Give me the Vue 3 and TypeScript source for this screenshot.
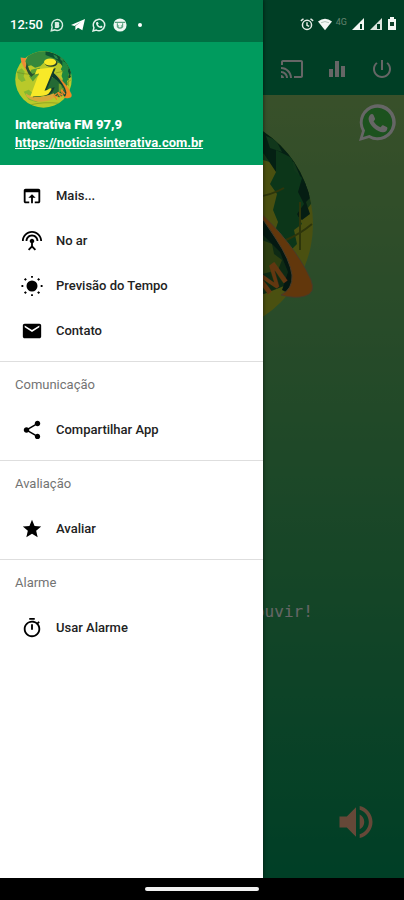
<script setup lang="ts">
interface MenuItem {
  label: string
  icon: string
}
interface MenuSection {
  title: string
  items: MenuItem[]
}

const icons: Record<string, string> = {
  browser:
    'M19 4H5c-1.110 0-2 .9-2 2v12c0 1.100.89 2 2 2h4v-2H5V8h14v10h-4v2h4c1.100 0 2-.9 2-2V6c0-1.100-.89-2-2-2zm-7 6l-4 4h3v6h2v-6h3l-4-4z',
  antenna:
    'M12 5c-3.870 0-7 3.130-7 7h2c0-2.760 2.240-5 5-5s5 2.240 5 5h2c0-3.870-3.130-7-7-7zm1 9.290c.88-.39 1.500-1.260 1.500-2.290 0-1.380-1.120-2.500-2.500-2.500S9.500 10.620 9.500 12c0 1.020.62 1.900 1.500 2.290v3.300L7.590 21 9 22.410l3-3 3 3L16.410 21 13 17.590v-3.300zM12 1C5.930 1 1 5.930 1 12h2c0-4.970 4.030-9 9-9s9 4.030 9 9h2c0-6.070-4.930-11-11-11z',
  sun:
    'M12 6a6 6 0 1 0 0 12 6 6 0 0 0 0-12zM11 1h2v2h-2zM11 21h2v2h-2zM.5 11h2v2h-2zM21.500 11h2v2h-2zM4.800 3.200l1.600 1.600-1.600 1.600-1.600-1.600zM19.200 3.200l1.600 1.600-1.600 1.600-1.600-1.600zM4.800 17.600l1.600 1.600-1.600 1.600-1.600-1.600zM19.200 17.600l1.600 1.600-1.600 1.600-1.600-1.600z',
  mail:
    'M20 4H4c-1.100 0-1.990.9-1.990 2L2 18c0 1.100.9 2 2 2h16c1.100 0 2-.9 2-2V6c0-1.100-.9-2-2-2zm0 4l-8 5-8-5V6l8 5 8-5v2z',
  share:
    'M18 16.080c-.76 0-1.440.3-1.960.77L8.910 12.700c.05-.23.09-.46.09-.7s-.04-.47-.09-.7l7.050-4.110c.54.5 1.250.81 2.040.81 1.660 0 3-1.340 3-3s-1.340-3-3-3-3 1.340-3 3c0 .24.04.47.09.7L8.040 9.810C7.500 9.310 6.790 9 6 9c-1.660 0-3 1.340-3 3s1.340 3 3 3c.79 0 1.500-.31 2.040-.81l7.120 4.160c-.05.21-.08.43-.08.65 0 1.610 1.310 2.920 2.920 2.920s2.920-1.310 2.920-2.920-1.310-2.920-2.920-2.920z',
  star:
    'M12 17.270L18.180 21l-1.640-7.030L22 9.240l-7.190-.61L12 2 9.190 8.630 2 9.240l5.460 4.730L5.820 21z',
  timer:
    'M15 1H9v2h6V1zm-4 13h2V8h-2v6zm8.030-6.610l1.420-1.420c-.43-.51-.9-.99-1.410-1.410l-1.420 1.420C16.070 4.740 14.120 4 12 4c-4.970 0-9 4.030-9 9s4.020 9 9 9 9-4.030 9-9c0-2.120-.74-4.070-1.970-5.610zM12 20c-3.870 0-7-3.130-7-7s3.130-7 7-7 7 3.130 7 7-3.130 7-7 7z',
  cast:
    'M21 3H3c-1.100 0-2 .9-2 2v3h2V5h18v14h-7v2h7c1.100 0 2-.9 2-2V5c0-1.100-.9-2-2-2zM1 18v3h3c0-1.660-1.340-3-3-3zm0-4v2c2.760 0 5 2.240 5 5h2c0-3.870-3.130-7-7-7zm0-4v2c4.970 0 9 4.030 9 9h2c0-6.080-4.930-11-11-11z',
  bars: 'M10 20h4V4h-4v16zm-6 0h4v-8H4v8zM16 9v11h4V9h-4z',
  power:
    'M13 3h-2v10h2V3zm4.830 2.170l-1.420 1.420C17.990 7.860 19 9.810 19 12c0 3.870-3.130 7-7 7s-7-3.130-7-7c0-2.190 1.010-4.140 2.580-5.420L6.170 5.170C4.230 6.820 3 9.260 3 12c0 4.970 4.030 9 9 9s9-4.030 9-9c0-2.740-1.230-5.180-3.170-6.830z',
  volume:
    'M3 9v6h4l5 5V4L7 9H3zm13.500 3c0-1.770-1.020-3.290-2.500-4.030v8.050c1.480-.73 2.500-2.250 2.500-4.020zM14 3.230v2.060c2.890.86 5 3.540 5 6.710s-2.110 5.850-5 6.710v2.060c4.010-.91 7-4.490 7-8.770s-2.990-7.860-7-8.770z',
}

const mainItems: MenuItem[] = [
  { label: 'Mais...', icon: 'browser' },
  { label: 'No ar', icon: 'antenna' },
  { label: 'Previsão do Tempo', icon: 'sun' },
  { label: 'Contato', icon: 'mail' },
]

const sections: MenuSection[] = [
  { title: 'Comunicação', items: [{ label: 'Compartilhar App', icon: 'share' }] },
  { title: 'Avaliação', items: [{ label: 'Avaliar', icon: 'star' }] },
  { title: 'Alarme', items: [{ label: 'Usar Alarme', icon: 'timer' }] },
]

const actions: MenuItem[] = [
  { label: 'Transmitir', icon: 'cast' },
  { label: 'Equalizador', icon: 'bars' },
  { label: 'Desligar', icon: 'power' },
]
</script>

<template>
  <div class="phone">
    <svg class="defs" aria-hidden="true">
      <defs>
        <clipPath id="globe-clip"><circle cx="112" cy="112" r="111" /></clipPath>
        <symbol id="globe" viewBox="0 0 224 224">
          <circle cx="112" cy="112" r="111" fill="#b9c92a" />
          <g clip-path="url(#globe-clip)">
            <path d="M40 40L60 0h50l60 0 40 30 20 50-12 16-8-14-8-22-16-8-13-4-14-6-20 6-20-8-20 20-20 6-16-10-14 4z" fill="#35883c" />
            <path d="M120 0l52 14 26 24 18 30 4 16-12 2-8-16-14-10-12-18-20-14-34-12z" fill="#0c5030" />
            <path d="M150 14l14 6 6 12-12-4zM176 24l10 4 6 12-12-4zM196 48l8 2 6 14-10-4z" fill="#2b8a44" />
            <path d="M206 72l12-2 4 14-6 6 4 12-8 6-12-8 2-12z" fill="#0e4a30" />
            <path d="M186 38l16 8 2 12 8 8-4 14 6 12-7 10 5 10-8 6 3 14-10 10-5-12-8-8 4-12-5-12 4-16-7-10 6-12z" fill="#20883f" />
            <path d="M8 80l18-12 12 14-4 18 8 16-16 6-14-14zM34 160l20-8 16 14 30 8 4 16-20 10-30-8z" fill="#82b832" />
            <path d="M64 74l34-8-8 30-20 24-14-20z" fill="#58a035" />
            <path d="M130 100l34 10 34 26 6 34-30 12-44-8-16-20z" fill="#246a34" />
            <path d="M172 128l10 4 2 10 8 6-4 10-16 4z" fill="#6f9c2c" />
            <path d="M8 84Q60 96 100 90M160 86Q180 84 194 76M196 128Q210 122 222 112M210 90v48M60 212Q112 198 176 206" fill="none" stroke="#71851d" stroke-width="2" />
          </g>
          <path d="M22 26l24 2-6 10 4 22 14 28-12-8-14-22-8-18z" fill="#ee8a38" />
          <path d="M46 44l10 30 12 16 12-4-16 16-12-14-10-22z" fill="#28502f" />
          <path d="M150 84l28 26 22 24 8 30-8 18-8-4 6-18-8-20-26-26-20-12z" fill="#0a3c2c" />
          <path d="M160 92Q182 110 198 131 212 148 221 168 226 181 215 184 205 187 191 183 203 177 202 163 200 148 186 127 176 110 160 92z" fill="#f58a20" stroke="#b09468" stroke-width="1" />
          <path d="M42 166q24 18 66 14 24-4 44-14l6 14-20 14q-54 16-92-14z" fill="#d9a83a" />
          <text class="fm" transform="translate(162 194) rotate(-36)">FM</text>
          <path d="M96 76l64-8-36 86q14-2 24-10l8-2q-10 30-36 34l-50 6 34-86-14 2z" fill="#153c2c" />
          <path d="M86 72l68-8-38 92q10-2 22-10l6 2q-8 24-32 28l-52 4 34-92-16 4z" fill="#f8e928" />
          <ellipse cx="142" cy="47" rx="25" ry="15" fill="#23412b" />
          <ellipse cx="138" cy="43" rx="24" ry="14" fill="#f8e928" />
        </symbol>
      </defs>
    </svg>

    <div class="stage">
      <main class="screen">
        <div class="status-space"></div>
        <header class="appbar">
          <button v-for="a in actions" :key="a.icon" class="icon-btn" type="button" :aria-label="a.label">
            <svg viewBox="0 0 24 24"><path :d="icons[a.icon]" /></svg>
          </button>
        </header>
        <section class="player">
          <div class="hero">
            <svg class="cover"><use href="#globe" /></svg>
            <button class="whatsapp" type="button" aria-label="WhatsApp">
              <svg viewBox="0 0 38 38">
                <path d="M1 37l3-10A18 18 0 1 1 11 34z" fill="#fff" />
                <path d="M5 33l2-6.500A14.800 14.800 0 1 1 11.500 31z" fill="#48cc4c" />
                <path d="M12 11c1-1.500 3-1.500 3.500 0l1.500 3.500c.5 1-1 2-1.500 2.800 1.800 3 4 4.700 7 6 1-.8 1.500-2.500 2.600-2l4 2c.8.500 0 3-1 4-5 4-17-5-17.500-12 0-1.700.5-3.200 1.400-4.300z" fill="#fff" />
              </svg>
            </button>
          </div>
          <p class="hint">Aperte play para ouvir!</p>
          <button class="volume" type="button" aria-label="Volume">
            <svg viewBox="0 0 24 24"><path :d="icons.volume" /></svg>
          </button>
        </section>
      </main>
      <div class="scrim"></div>

      <div class="status-right">
        <svg class="s14" viewBox="0 0 16 16" fill="none" stroke="#e6ece6">
          <circle cx="8" cy="9" r="5.200" stroke-width="1.700" />
          <path d="M1 4.500L4 2M15 4.500L12 2M8 6v3.500l2.500 1.300" stroke-width="1.700" />
        </svg>
        <svg class="s14" viewBox="0 0 16 16"><path d="M0 5Q8-1 16 5L8 15z" fill="#f4f7f4" /><path d="M3.500 6.500Q8 4 12.500 6.500" fill="none" stroke="#a8bbb0" /></svg>
        <span class="net">4G</span>
        <svg class="s14" viewBox="0 0 14 14"><path d="M13 1v12H1z" fill="#f4f7f4" /><path d="M9 7h2v5H9z" fill="#003d24" /></svg>
        <svg class="s14" viewBox="0 0 14 14"><path d="M13 1v12H1z" fill="#dce5de" /><path d="M8 7h3v5H8z" fill="#003d24" /></svg>
        <svg class="battery" viewBox="0 0 10 14"><path d="M3 0h4v2h2v11H1V2h2z" fill="#f4f7f4" /><path d="M3 5h4v4H3z" fill="#123f2a" /></svg>
      </div>

      <aside class="drawer">
        <div class="status-left">
          <span class="time">12:50</span>
          <svg class="s14" viewBox="0 0 16 16">
            <path d="M1.500 14.500l1-4A6.200 6.200 0 1 1 5.500 13.600z" fill="none" stroke="#d5ebdf" stroke-width="1.700" />
            <path d="M5.500 4.500h4q2 1 .8 3 1.500 2-.8 4h-4z" fill="#d5ebdf" />
          </svg>
          <svg class="s14" viewBox="0 0 16 16"><path d="M0 8L16 1l-3 13-5-3-3 3V9l7-5-8 5z" fill="#fff" /></svg>
          <svg class="s14" viewBox="0 0 16 16">
            <path d="M1.200 14.800l1-3.800A6.500 6.500 0 1 1 5 13.800z" fill="none" stroke="#e2f2ea" stroke-width="1.700" />
            <path d="M5.200 4.500l1.600 0 .8 2-.9 1q1 1.600 2.600 2.200l1-1 1.800 1q0 1.800-2 1.800-5-.8-5.600-5.400z" fill="#e2f2ea" />
          </svg>
          <svg class="s14" viewBox="0 0 16 16">
            <circle cx="8" cy="8" r="7.500" fill="#eff8f3" />
            <path d="M2 5h12M5 6v4q3 3 6 0V6M6 9h1M9 9h1" fill="none" stroke="#57a17f" stroke-width="1.300" />
          </svg>
          <span class="dot"></span>
        </div>
        <div class="profile">
          <svg class="avatar"><use href="#globe" /></svg>
          <strong>Interativa FM 97,9</strong>
          <a href="https://noticiasinterativa.com.br">https://noticiasinterativa.com.br</a>
        </div>
        <nav>
          <div class="group">
            <button v-for="m in mainItems" :key="m.label" class="item" type="button">
              <svg viewBox="0 0 24 24"><path :d="icons[m.icon]" /></svg>{{ m.label }}
            </button>
          </div>
          <div v-for="s in sections" :key="s.title" class="group titled">
            <h2>{{ s.title }}</h2>
            <button v-for="m in s.items" :key="m.label" class="item" type="button">
              <svg viewBox="0 0 24 24"><path :d="icons[m.icon]" /></svg>{{ m.label }}
            </button>
          </div>
        </nav>
      </aside>
    </div>
    <footer class="gesture"><span></span></footer>
  </div>
</template>

<style>
body {
  margin: 0;
}
</style>

<style scoped>
.phone {
  display: flex;
  flex-direction: column;
  min-height: 100vh;
  font-family: Roboto, "Liberation Sans", sans-serif;
  overflow: hidden;
}
.defs {
  position: absolute;
  width: 0;
  height: 0;
}
svg {
  display: block;
}
button {
  padding: 0;
  border: 0;
  background: none;
  font: inherit;
  cursor: pointer;
}
.stage {
  position: relative;
  display: flex;
  flex: 1;
}
.screen {
  display: flex;
  flex: 1;
  flex-direction: column;
  background: #009b5e;
}
.status-space {
  height: 42px;
}
.appbar {
  display: flex;
  justify-content: flex-end;
  align-items: center;
  gap: 21px;
  height: 53px;
  padding-right: 10px;
}
.icon-btn svg {
  width: 24px;
  height: 24px;
  fill: #fff;
}
.player {
  display: flex;
  flex: 1;
  flex-direction: column;
  background: linear-gradient(#8ec869, #009d5f);
}
.hero {
  display: grid;
}
.hero > * {
  grid-area: 1 / 1;
}
.cover {
  width: 224px;
  height: 224px;
  margin-top: 17px;
  justify-self: center;
}
.fm {
  fill: #f58a28;
  font-size: 32px;
  font-weight: 700;
}
.whatsapp {
  align-self: start;
  justify-self: end;
  margin: 9px 8px;
}
.whatsapp svg {
  width: 38px;
  height: 38px;
}
.hint {
  margin: 266px 0 0;
  color: #fff;
  font: 16px/20px "DejaVu Sans Mono", monospace;
  text-align: center;
}
.volume {
  align-self: flex-end;
  margin: auto 26px 34px 0;
}
.volume svg {
  width: 44px;
  height: 44px;
  fill: #ffb48c;
}
.scrim {
  position: absolute;
  inset: 0;
  background: rgba(0, 0, 0, 0.6);
}
.status-right {
  position: absolute;
  top: 0;
  right: 7px;
  display: flex;
  align-items: center;
  gap: 4px;
  height: 48px;
}
.s14 {
  width: 14px;
  height: 14px;
}
.net {
  align-self: flex-start;
  padding-top: 16px;
  color: #64836f;
  font-size: 9px;
  line-height: 12px;
}
.battery {
  width: 10px;
  height: 14px;
}
.drawer {
  position: absolute;
  top: 0;
  bottom: 0;
  left: 0;
  width: 65%;
  background: #fff;
  box-shadow: 1px 0 3px rgba(0, 0, 0, 0.4);
}
.status-left {
  display: flex;
  align-items: center;
  gap: 7px;
  box-sizing: border-box;
  height: 42px;
  padding: 8px 0 0 10px;
  background: #007043;
}
.time {
  color: #fff;
  font-size: 13px;
  font-weight: 500;
  line-height: 16px;
}
.dot {
  width: 4px;
  height: 4px;
  margin-left: 4px;
  border-radius: 50%;
  background: #fff;
}
.profile {
  display: flex;
  flex-direction: column;
  align-items: flex-start;
  padding: 9px 15px 13px;
  background: #009b5e;
  color: #fff;
  font-size: 13px;
  font-weight: 700;
  line-height: 18px;
}
.profile a {
  color: inherit;
}
.avatar {
  width: 57px;
  height: 57px;
  margin-bottom: 8px;
}
.group {
  padding: 8px 0;
}
.titled {
  padding-top: 0;
  border-top: 1px solid #dedede;
}
.titled h2 {
  margin: 0;
  padding-left: 15px;
  color: #737373;
  font-size: 13px;
  font-weight: 400;
  line-height: 45px;
}
.item {
  display: flex;
  align-items: center;
  gap: 13px;
  width: 100%;
  height: 45px;
  padding-left: 21px;
  color: #222;
  font-size: 13px;
  font-weight: 500;
}
.item svg {
  width: 22px;
  height: 22px;
  fill: #000;
}
.gesture {
  display: flex;
  justify-content: center;
  align-items: center;
  height: 22px;
  background: #000;
}
.gesture span {
  width: 28%;
  height: 4px;
  border-radius: 2px;
  background: #f2f2f2;
}
</style>
